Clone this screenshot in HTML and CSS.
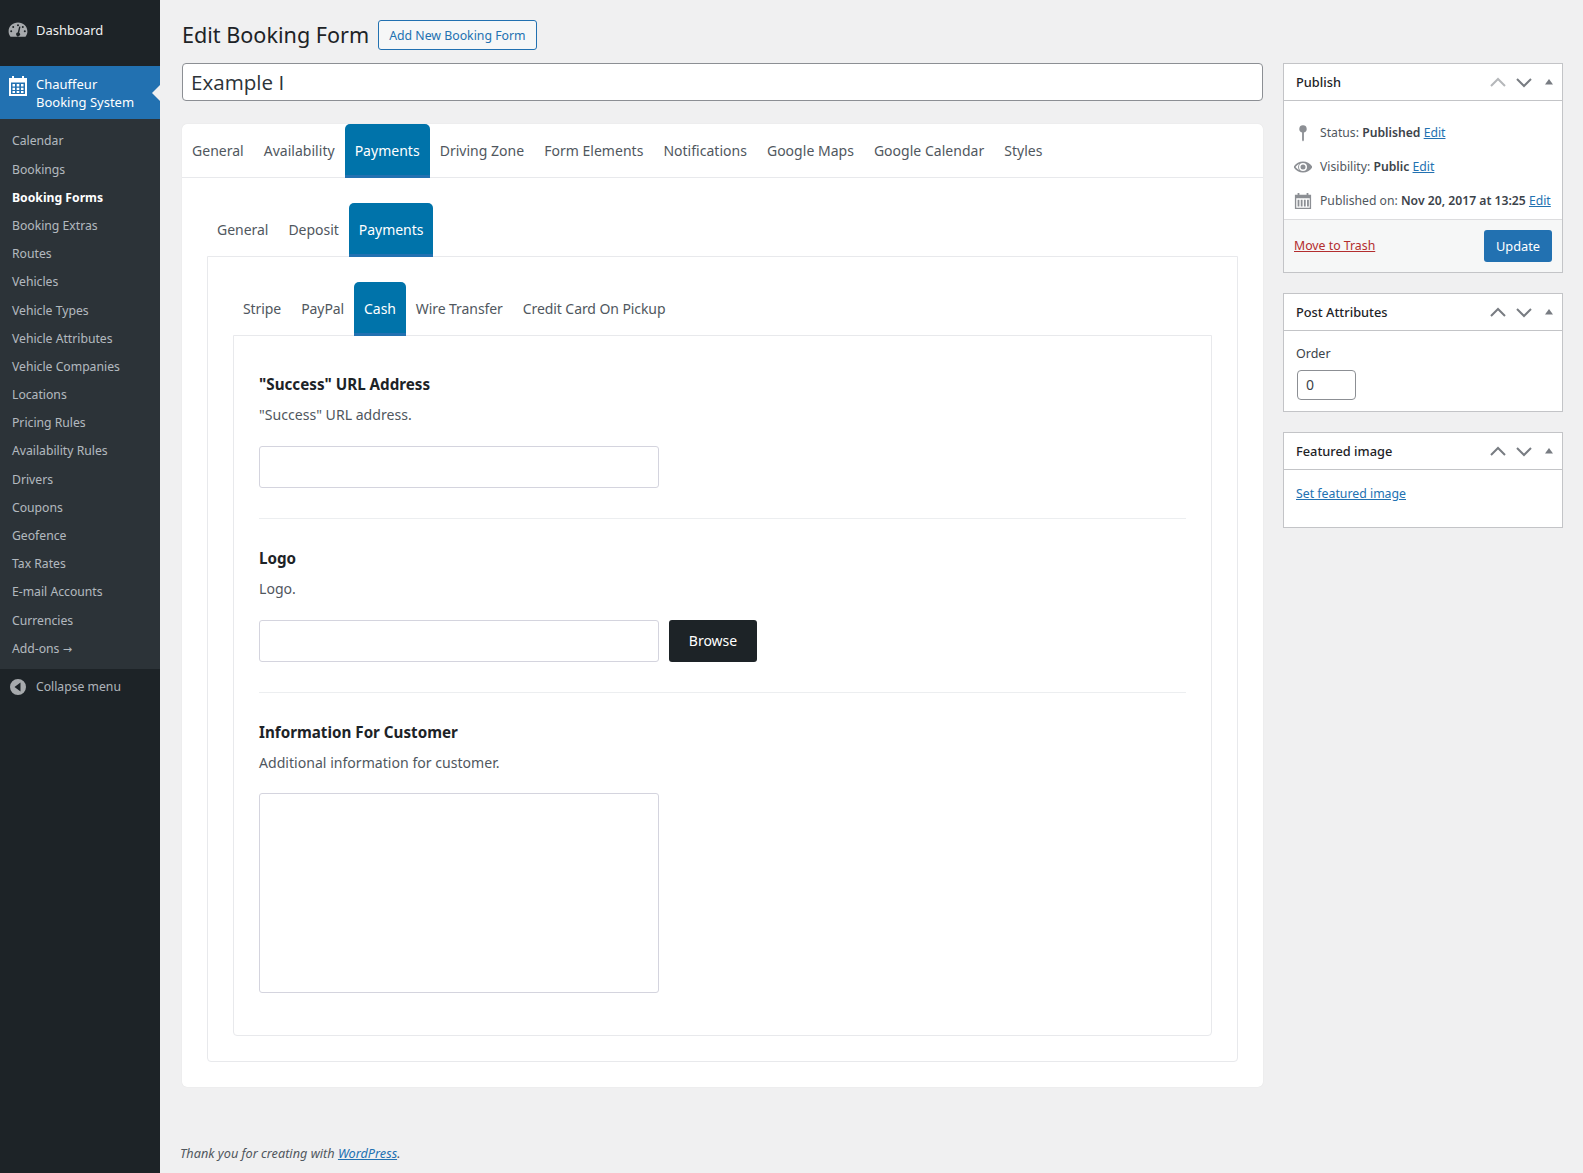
FILE: index.html
```html
<!DOCTYPE html>
<html lang="en">
<head>
<meta charset="utf-8">
<title>Edit Booking Form</title>
<link rel="stylesheet" href="styles.css">
</head>
<body>
<div class="admin">
<aside class="sidebar">
  <a class="top-item">
    <svg class="menu-icon" viewBox="0 0 20 20"><path fill="#a7aaad" d="M10 2.6C4.8 2.6.6 6.5.6 11.4c0 2 .7 3.8 1.9 5.3h15c1.200-1.500 1.900-3.300 1.900-5.300 0-4.900-4.200-8.800-9.400-8.800zM10 4.200a1 1 0 1 1 0 2 1 1 0 0 1 0-2zM5.200 6a1 1 0 1 1 0 2 1 1 0 0 1 0-2zM14.800 6a1 1 0 1 1 0 2 1 1 0 0 1 0-2zM3.200 10.200a1 1 0 1 1 0 2 1 1 0 0 1 0-2zM16.800 10.200a1 1 0 1 1 0 2 1 1 0 0 1 0-2zM12.500 6.800l-1.300 6a1.900 1.900 0 1 1-1.500-.3l1.500-6z" fill-rule="evenodd"/></svg>
    <span>Dashboard</span>
  </a>
  <a class="active-item">
    <svg class="menu-icon" viewBox="0 0 20 20"><path fill="#fff" fill-rule="evenodd" d="M4 0h2v2h8V0h2v2h3v18H1V2h3zM3 6.500V18h14V6.500zM4.500 8h2.500v2.500H4.500zM8.700 8h2.600v2.500H8.700zM13 8h2.500v2.500H13zM4.500 11.700h2.500v2.300H4.500zM8.700 11.700h2.600v2.300H8.700zM13 11.700h2.500v2.300H13zM4.500 15h2.500v2H4.500zM8.700 15h2.600v2H8.700zM13 15h2.500v2H13z"/></svg>
    <span>Chauffeur<br>Booking System</span>
  </a>
  <ul class="submenu">
    <li>Calendar</li>
    <li>Bookings</li>
    <li class="current">Booking Forms</li>
    <li>Booking Extras</li>
    <li>Routes</li>
    <li>Vehicles</li>
    <li>Vehicle Types</li>
    <li>Vehicle Attributes</li>
    <li>Vehicle Companies</li>
    <li>Locations</li>
    <li>Pricing Rules</li>
    <li>Availability Rules</li>
    <li>Drivers</li>
    <li>Coupons</li>
    <li>Geofence</li>
    <li>Tax Rates</li>
    <li>E-mail Accounts</li>
    <li>Currencies</li>
    <li>Add-ons <span class="arrow">→</span></li>
  </ul>
  <a class="collapse">
    <svg class="menu-icon" viewBox="0 0 20 20"><path fill="#a7aaad" fill-rule="evenodd" d="M10 2a8 8 0 1 1 0 16 8 8 0 0 1 0-16zM12.500 5.500 6.500 10l6 4.500z"/></svg>
    <span>Collapse menu</span>
  </a>
</aside>

<main class="main">
  <div class="columns">
    <div class="col-left">
      <div class="heading">
        <h1>Edit Booking Form</h1>
        <a class="add-new">Add New Booking Form</a>
      </div>
      <div class="title-input">Example I</div>

      <section class="card">
        <div class="tabs tabs-top">
          <a>General</a><a>Availability</a><a class="on">Payments</a><a>Driving Zone</a><a>Form Elements</a><a>Notifications</a><a>Google Maps</a><a>Google Calendar</a><a>Styles</a>
        </div>
        <div class="level2">
          <div class="tabs tabs-in">
            <a>General</a><a>Deposit</a><a class="on">Payments</a>
          </div>
          <div class="panel panel-2">
            <div class="tabs tabs-in">
              <a>Stripe</a><a>PayPal</a><a class="on">Cash</a><a>Wire Transfer</a><a>Credit Card On Pickup</a>
            </div>
            <div class="panel panel-3">
              <div class="field">
                <h3>"Success" URL Address</h3>
                <p>"Success" URL address.</p>
                <div class="control"></div>
              </div>
              <div class="field">
                <h3>Logo</h3>
                <p>Logo.</p>
                <div class="control-row"><div class="control"></div><a class="browse">Browse</a></div>
              </div>
              <div class="field last">
                <h3>Information For Customer</h3>
                <p>Additional information for customer.</p>
                <div class="control area"></div>
              </div>
            </div>
          </div>
        </div>
      </section>
    </div>

    <div class="col-right">
      <section class="box">
        <header class="box-head"><h2>Publish</h2>
          <svg class="arrows" viewBox="0 0 80 14"><path class="faint" d="M9 11 16 4l7 7"/><path d="M35 4l7 7 7-7"/><path class="tri" d="M63 9.500l4-5.500 4 5.500z"/></svg>
        </header>
        <div class="pub-rows">
          <div class="pub-row"><svg class="pub-icon" viewBox="0 0 20 20"><path fill="#8c8f94" d="M10 1.500a4 4 0 0 1 1 7.900V18l-1 1.500L9 18V9.400A4 4 0 0 1 10 1.500z"/></svg><span>Status: <b>Published</b> <a>Edit</a></span></div>
          <div class="pub-row"><svg class="pub-icon" viewBox="1 1 18 18"><path fill="#8c8f94" fill-rule="evenodd" d="M10 4.500c4 0 7.500 2.300 9.500 5.500-2 3.200-5.500 5.500-9.500 5.500S2.500 13.200.5 10C2.500 6.800 6 4.500 10 4.500zM10 6a4 4 0 1 0 0 8 4 4 0 0 0 0-8zM2.500 10c1 1.400 2.300 2.500 3.800 3.300A5.500 5.500 0 0 1 6.300 6.700 9.500 9.500 0 0 0 2.500 10z"/><circle cx="10" cy="10" r="2.500" fill="#8c8f94"/></svg><span>Visibility: <b>Public</b> <a>Edit</a></span></div>
          <div class="pub-row"><svg class="pub-icon" viewBox="0 0 20 20"><path fill="#8c8f94" fill-rule="evenodd" d="M4 1h2v2h8V1h2v2h3v16H1V3h3zM2.500 7v10.500h15V7zM4 8.500h2V16H4zM7.500 8.500h2V16h-2zM11 8.500h2V16h-2zM14.500 8.500h2V16h-2z"/></svg><span>Published on: <b>Nov 20, 2017 at 13:25</b> <a>Edit</a></span></div>
        </div>
        <footer class="pub-foot"><a class="trash">Move to Trash</a><a class="update">Update</a></footer>
      </section>

      <section class="box">
        <header class="box-head"><h2>Post Attributes</h2>
          <svg class="arrows" viewBox="0 0 80 14"><path d="M9 11 16 4l7 7"/><path d="M35 4l7 7 7-7"/><path class="tri" d="M63 9.500l4-5.500 4 5.500z"/></svg>
        </header>
        <div class="attr-body">
          <div class="order-label">Order</div>
          <div class="order-input">0</div>
        </div>
      </section>

      <section class="box">
        <header class="box-head"><h2>Featured image</h2>
          <svg class="arrows" viewBox="0 0 80 14"><path d="M9 11 16 4l7 7"/><path d="M35 4l7 7 7-7"/><path class="tri" d="M63 9.500l4-5.500 4 5.500z"/></svg>
        </header>
        <div class="feat-body"><a>Set featured image</a></div>
      </section>
    </div>
  </div>
  <footer class="page-foot">Thank you for creating with <a>WordPress</a>.</footer>
</main>
</div>
</body>
</html>
```

FILE: styles.css
```css
* { box-sizing: border-box; }
html, body { margin: 0; padding: 0; }
body {
  background: #f0f0f1;
  color: #3c434a;
  font-family: "Noto Sans", sans-serif;
  font-size: 13px;
  line-height: 1.4;
}
a { color: #2271b1; }
.admin { display: flex; min-height: 1173px; }

.sidebar { width: 160px; flex: none; background: #1d2327; color: #f0f0f1; }
.menu-icon { width: 20px; height: 20px; flex: none; }
.top-item { display: flex; align-items: center; gap: 8px; height: 66px; padding: 0 0 6px 8px; color: #f0f0f1; font-size: 13px; }
.active-item { position: relative; display: flex; gap: 8px; height: 53px; padding: 9px 0 0 8px; background: #2271b1; color: #fff; font-size: 13px; line-height: 18px; }
.active-item .menu-icon { margin-top: 1px; }
.active-item::after { content: ""; position: absolute; right: 0; top: 19px; border: 8px solid transparent; border-right-color: #f0f0f1; border-left-width: 0; }
.submenu { list-style: none; margin: 0; padding: 7.400px 0 6.600px; background: #2c3338; color: rgba(240, 246, 252, .7); }
.submenu li { height: 28.200px; padding: 6px 0 0 12px; font-size: 12.200px; line-height: 18px; white-space: nowrap; }
.submenu .current { color: #fff; font-weight: 700; }
.arrow { font-family: "DejaVu Sans", sans-serif; font-size: 11px; line-height: 1; }
.collapse { display: flex; align-items: center; gap: 8px; height: 35px; padding: 1px 0 0 8px; color: rgba(240, 246, 252, .7); font-size: 12.200px; }

.main { flex: 1; min-width: 0; padding-left: 22px; position: relative; }
.columns { display: flex; gap: 20px; padding-right: 20px; }
.col-left { width: 1081px; flex: none; }
.col-right { width: 280px; flex: none; padding-top: 63px; display: flex; flex-direction: column; gap: 20px; }

.heading { display: flex; align-items: center; gap: 9px; height: 63px; padding-bottom: 6px; padding-top: 12px; }
h1 { margin: 0; font-size: 21.600px; font-weight: 400; color: #1d2327; line-height: 30px; }
.add-new { display: block; height: 30px; padding: 0 10px; border: 1px solid #2271b1; border-radius: 3px; background: #f6f7f7; font-size: 12.300px; line-height: 29px; }
.title-input { height: 38px; padding: 0 8px; border: 1px solid #8c8f94; border-radius: 4px; background: #fff; color: #2c3338; font-family: "Open Sans", sans-serif; font-size: 20.600px; line-height: 37px; }

.card { margin-top: 23px; height: 963px; background: #fff; border-radius: 5px; box-shadow: 0 0 1px rgba(0,0,0,.12); }
.tabs { display: flex; position: relative; z-index: 1; }
.tabs a { display: block; padding: 0 10px; height: 54px; line-height: 53px; color: #50575e; font-size: 14px; white-space: nowrap; }
.tabs .on { background: #0073aa; color: #fff; border-radius: 5px 5px 0 0; border-bottom: 3px solid #2271b1; }
.tabs-top { padding-left: 0; border-bottom: 1px solid #e8e9ec; height: 54px; }
.tabs-top a { height: 54px; line-height: 53px; letter-spacing: .02px; }
.tabs-in { padding-left: 0; height: 53px; }
.tabs-in a { letter-spacing: -.03px; }
.panel-2 .tabs-in a { letter-spacing: -.08px; }
.level2 { padding: 25px 25px 0 25px; }
.panel { border: 1px solid #e8e9ec; background: #fff; border-radius: 0 0 4px 4px; }
.panel-2 { padding: 25px; height: 806px; }
.panel-3 { height: 701px; padding: 26px 25px 0; }
.field { padding: 10px 0 30px; border-bottom: 1px solid #eceef0; margin-bottom: 17px; }
.field.last { border: 0; padding-bottom: 0; margin: 0; }
.field h3 { margin: 0; color: #1d2327; font-size: 15.200px; font-weight: 700; line-height: 24px; }
.field p { margin: 7px 0 0; color: #50575e; font-size: 14.100px; line-height: 24px; }
.control { width: 400px; height: 42px; margin-top: 19px; border: 1px solid #d4d4de; border-radius: 3px; background: #fff; }
.control.area { height: 200px; margin-top: 18px; }
.control-row { display: flex; align-items: flex-end; gap: 10px; }
.browse { display: block; width: 88px; height: 42px; background: #1d2327; border-radius: 3px; color: #fff; text-align: center; line-height: 42px; font-size: 14px; }

.box { background: #fff; border: 1px solid #c3c4c7; }
.box-head { display: flex; align-items: center; justify-content: space-between; height: 37px; padding-left: 12px; border-bottom: 1px solid #c3c4c7; }
.box-head h2 { margin: 0; padding-top: 1px; font-size: 12.800px; font-weight: 500; color: #1d2327; }
.arrows { width: 80px; height: 14px; flex: none; }
.arrows path { fill: none; stroke: #787c82; stroke-width: 2; }
.arrows .faint { stroke: #b5b7ba; }
.arrows .tri { fill: #787c82; stroke: none; }
.pub-rows { padding: 15px 10px 0; height: 118px; }
.pub-row { display: flex; align-items: center; gap: 8px; height: 34px; font-size: 12.200px; color: #50575e; white-space: nowrap; }
.pub-row b { font-weight: 600; color: #3c434a; }
.pub-row a { text-decoration: underline; }
.pub-icon { width: 18px; height: 18px; flex: none; }
.pub-foot { display: flex; align-items: center; justify-content: space-between; height: 53px; padding: 0 10px; background: #f6f7f7; border-top: 1px solid #dcdcde; }
.trash { color: #b32d2e; text-decoration: underline; font-size: 12.300px; }
.update { display: block; width: 68px; height: 32px; background: #2271b1; color: #fff; border-radius: 3px; text-align: center; line-height: 32px; font-size: 12.800px; }
.attr-body { padding: 14px 12px 0; height: 80px; }
.order-label { font-size: 12.500px; line-height: 18px; color: #3c434a; }
.order-input { width: 59px; height: 30px; margin: 7px 0 0 1px; padding-left: 8px; border: 1px solid #8c8f94; border-radius: 4px; line-height: 28px; font-size: 14px; }
.feat-body { height: 57px; padding: 15px 12px 0; font-size: 12.300px; }
.feat-body a { text-decoration: underline; }

.page-foot { position: absolute; left: 20px; top: 1145px; font-size: 12.700px; font-style: italic; color: #50575e; }
.page-foot a { text-decoration: underline; }
```
